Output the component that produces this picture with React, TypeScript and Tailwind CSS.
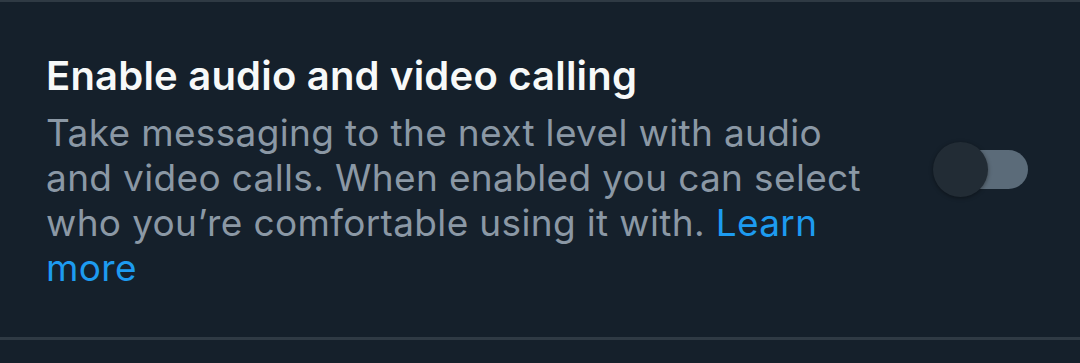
import React from "react";

export default function App() {
  return (
    <div className="w-[1080px] h-[363px] bg-[#15202b] flex flex-col" style={{ fontFamily: "Inter, 'Noto Sans', sans-serif" }}>
      <div className="h-[2px] bg-[#2f3a44]" />
      <div className="flex-1 flex items-start pl-[46px] pt-[50px]">
        <div className="w-[840px] flex flex-col">
          <div className="text-[40px] leading-[48px] font-semibold text-[#f7f9f9] tracking-[0.2px] whitespace-nowrap">
            Enable audio and video calling
          </div>
          <div className="text-[37px] leading-[45px] text-[#8b98a5] mt-[10px] tracking-[0.35px] whitespace-nowrap">
            Take messaging to the next level with audio
            <br />
            and video calls. When enabled you can select
            <br />
            who you’re comfortable using it with.{" "}
            <span className="text-[#1d9bf0]">Learn</span>
            <br />
            <span className="text-[#1d9bf0]">more</span>
          </div>
        </div>
        <div className="ml-[47px] mt-[90px] relative w-[95px] h-[55px] flex items-center">
          <div className="absolute left-[27px] w-[68px] h-[39px] rounded-full bg-[#5b6b79]" />
          <div className="absolute left-0 w-[55px] h-[55px] rounded-full bg-[#222c35] shadow-[0_1px_4px_rgba(0,0,0,0.4)]" />
        </div>
      </div>
      <div className="h-[3px] bg-[#2f3a44] mb-[23px]" />
    </div>
  );
}
